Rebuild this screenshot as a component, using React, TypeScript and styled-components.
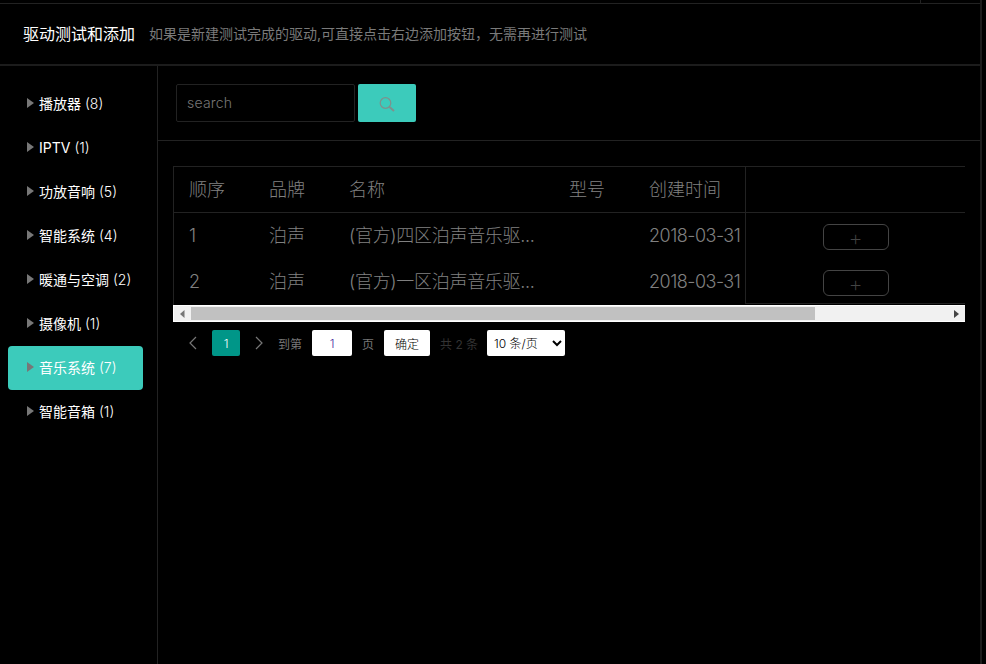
import React from "react";
import styled, { createGlobalStyle } from "styled-components";

const Global = createGlobalStyle`
  html, body { margin: 0; padding: 0; background: #000; }
  body { font-family: Inter, "Noto Sans CJK SC", sans-serif; }
  * { box-sizing: border-box; }
`;

const Page = styled.div`
  width: 982px;
  height: 664px;
  border-right: 2px solid #1c1c1c;
  overflow: hidden;
  display: flex;
  flex-direction: column;
  background: #000;
`;
const TopStrip = styled.div`
  height: 4px;
  border-bottom: 1px solid #222;
  padding-left: 920px;
  flex: none;
`;
const Tick = styled.div`
  width: 1px;
  height: 3px;
  background: #222;
`;
const Header = styled.header`
  height: 62px;
  flex: none;
  display: flex;
  align-items: center;
  padding: 0 0 2px 23px;
  border-bottom: 2px solid #1c1c1c;
`;
const Title = styled.h1`
  margin: 0;
  font-size: 16px;
  font-weight: 400;
  color: #fff;
`;
const Sub = styled.span`
  margin-left: 14px;
  font-size: 14px;
  color: #7a7a7a;
  font-weight: 400;
`;
const Body = styled.div`
  flex: 1;
  display: flex;
  min-height: 0;
`;
const Side = styled.nav`
  width: 158px;
  flex: none;
  border-right: 1px solid #222;
  padding: 16px 14px 0 8px;
  display: flex;
  flex-direction: column;
`;
const SideItem = styled.div<{ $active?: boolean }>`
  height: 44px;
  flex: none;
  display: flex;
  align-items: center;
  padding: 0 0 2px 19px;
  gap: 5px;
  font-size: 14px;
  font-weight: 400;
  color: #fff;
  border-radius: 4px;
  background: ${(p) => (p.$active ? "#3ccbbb" : "transparent")};
`;
const Arrow = styled.i`
  width: 0;
  height: 0;
  border-left: 7px solid #777;
  border-top: 5.5px solid transparent;
  border-bottom: 5.5px solid transparent;
`;
const Count = styled.span`
  font-weight: 350;
  margin-left: 4px;
`;
const Main = styled.main`
  flex: 1;
  min-width: 0;
  display: flex;
  flex-direction: column;
`;
const SearchBar = styled.div`
  height: 75px;
  flex: none;
  border-bottom: 1px solid #222;
  padding: 18px 0 0 18px;
  display: flex;
  gap: 3px;
  align-items: flex-start;
`;
const SearchInput = styled.input`
  width: 179px;
  height: 38px;
  background: #000;
  border: 1px solid #222;
  border-radius: 2px;
  padding: 0 10px 2px;
  font: 300 14px Inter, sans-serif;
  letter-spacing: 0.2px;
  color: #ccc;
  &::placeholder { color: #777; opacity: 1; }
`;
const SearchBtn = styled.button`
  width: 58px;
  height: 38px;
  background: #3ccbbb;
  border: 0;
  border-radius: 2px;
  padding: 2px 0 0;
  display: flex;
  align-items: center;
  justify-content: center;
`;
const TableWrap = styled.div`
  margin: 25px 0 0 15px;
  width: 792px;
  flex: none;
`;
const Viewport = styled.div`
  height: 139px;
  border-left: 1px solid #222;
  overflow: hidden;
`;
const Track = styled.div`
  width: 791px;
`;
const Row = styled.div<{ $head?: boolean }>`
  display: grid;
  grid-template-columns: 80px 80px 220px 80px 111px 220px;
  height: ${(p) => (p.$head ? "47px" : "46px")};
  ${(p) => p.$head && "border-top: 1px solid #222; border-bottom: 1px solid #222;"}
`;
const Cell = styled.div<{ $head?: boolean }>`
  padding-left: 15px;
  font-size: 18px;
  font-weight: 300;
  color: #808080;
  line-height: ${(p) => (p.$head ? "45px" : "46px")};
  white-space: nowrap;
`;
const NameCell = styled(Cell)`
  letter-spacing: -0.3px;
`;
const DateCell = styled(Cell)`
  letter-spacing: -0.5px;
`;
const Fixed = styled.div<{ $last?: boolean }>`
  background: #000;
  border-left: 1px solid #222;
  display: flex;
  justify-content: center;
  align-items: flex-start;
  padding-top: 11px;
  height: ${(p) => (p.$last ? "45px" : "auto")};
  ${(p) => p.$last && "border-bottom: 1px solid #222;"}
`;
const AddBtn = styled.button`
  width: 66px;
  height: 26px;
  background: transparent;
  border: 1px solid #444;
  border-radius: 6px;
  color: #444;
  font: 200 22px Inter, sans-serif;
  line-height: 22px;
  padding: 2px 0 0;
`;
const ScrollBar = styled.div`
  height: 17px;
  display: flex;
  background: #f1f1f1;
  border: 1px solid #fff;
  border-right: 0;
`;
const ScrollStep = styled.div`
  width: 17px;
  flex: none;
  display: flex;
  align-items: center;
  justify-content: center;
`;
const ScrollThumb = styled.div`
  width: 624px;
  margin: 1px 0;
  background: #c1c1c1;
`;
const ScrollRest = styled.div`
  flex: 1;
`;
const Pager = styled.div`
  margin: 8px 0 0 15px;
  height: 26px;
  display: flex;
  align-items: center;
  font-size: 12px;
  color: #777;
`;
const Chev = styled.button<{ $w: number }>`
  width: ${(p) => p.$w}px;
  height: 26px;
  background: none;
  border: 0;
  padding: 0;
  display: flex;
  align-items: center;
  justify-content: center;
`;
const Current = styled.span`
  width: 28px;
  height: 26px;
  background: #009688;
  color: #fff;
  border-radius: 2px;
  display: flex;
  align-items: center;
  justify-content: center;
  font-size: 12px;
  font-weight: 300;
`;
const PageInput = styled.input`
  width: 40px;
  height: 26px;
  margin: 0 10px;
  text-align: center;
  border: 0;
  border-radius: 2px;
  background: #fff;
  color: #4a2ea0;
  font: 300 12px Inter, sans-serif;
  padding: 0;
`;
const Confirm = styled.button`
  width: 46px;
  height: 26px;
  margin: 0 10px;
  background: #fff;
  color: #000;
  border: 0;
  border-radius: 2px;
  font: 300 12px Inter, "Noto Sans CJK SC", sans-serif;
  padding: 0;
`;
const Total = styled.span`
  color: #333;
  margin-right: 9px;
`;
const Select = styled.select`
  width: 78px;
  height: 26px;
  background: #fff;
  color: #000;
  border: 0;
  border-radius: 2px;
  font: 300 12px Inter, "Noto Sans CJK SC", sans-serif;
  padding-left: 3px;
`;

const cats: [string, string, boolean?][] = [
  ["播放器", "(8)"],
  ["IPTV", "(1)"],
  ["功放音响", "(5)"],
  ["智能系统", "(4)"],
  ["暖通与空调", "(2)"],
  ["摄像机", "(1)"],
  ["音乐系统", "(7)", true],
  ["智能音箱", "(1)"],
];
const rows = [
  ["1", "泊声", "(官方)四区泊声音乐驱...", "", "2018-03-31"],
  ["2", "泊声", "(官方)一区泊声音乐驱...", "", "2018-03-31"],
];

export default function App() {
  return (
    <Page>
      <Global />
      <TopStrip><Tick /></TopStrip>
      <Header>
        <Title>驱动测试和添加</Title>
        <Sub>如果是新建测试完成的驱动,可直接点击右边添加按钮，无需再进行测试</Sub>
      </Header>
      <Body>
        <Side>
          {cats.map(([t, c, a]) => (
            <SideItem key={t} $active={a}>
              <Arrow />
              <span>{t}<Count>{c}</Count></span>
            </SideItem>
          ))}
        </Side>
        <Main>
          <SearchBar>
            <SearchInput placeholder="search" />
            <SearchBtn aria-label="search">
              <svg width="16" height="15" viewBox="0 0 16 15" fill="none">
                <circle cx="6.5" cy="6" r="5.3" stroke="#7f908c" strokeWidth="1.2" />
                <path d="M10.5 10 15 14" stroke="#7f908c" strokeWidth="2" />
              </svg>
            </SearchBtn>
          </SearchBar>
          <TableWrap>
            <Viewport>
              <Track>
                <Row $head>
                  <Cell $head>顺序</Cell>
                  <Cell $head>品牌</Cell>
                  <Cell $head>名称</Cell>
                  <Cell $head>型号</Cell>
                  <Cell $head>创建时间</Cell>
                  <Fixed />
                </Row>
                {rows.map((r, i) => (
                  <Row key={r[0]}>
                    <Cell>{r[0]}</Cell>
                    <Cell>{r[1]}</Cell>
                    <NameCell>{r[2]}</NameCell>
                    <Cell>{r[3]}</Cell>
                    <DateCell>{r[4]}</DateCell>
                    <Fixed $last={i === rows.length - 1}>
                      <AddBtn>+</AddBtn>
                    </Fixed>
                  </Row>
                ))}
              </Track>
            </Viewport>
            <ScrollBar>
              <ScrollStep>
                <svg width="5" height="8" viewBox="0 0 5 8"><path d="M4.5 0v8L0 4z" fill="#777" /></svg>
              </ScrollStep>
              <ScrollThumb />
              <ScrollRest />
              <ScrollStep>
                <svg width="5" height="8" viewBox="0 0 5 8"><path d="M0 0v8l5-4z" fill="#444" /></svg>
              </ScrollStep>
            </ScrollBar>
          </TableWrap>
          <Pager>
            <Chev $w={39} aria-label="prev">
              <svg width="10" height="14" viewBox="0 0 10 14" fill="none">
                <path d="M8 1 2 7l6 6" stroke="#777" strokeWidth="1.2" />
              </svg>
            </Chev>
            <Current>1</Current>
            <Chev $w={38} aria-label="next">
              <svg width="10" height="14" viewBox="0 0 10 14" fill="none">
                <path d="M2 1l6 6-6 6" stroke="#777" strokeWidth="1.2" />
              </svg>
            </Chev>
            到第
            <PageInput defaultValue="1" />
            页
            <Confirm>确定</Confirm>
            <Total>共 2 条</Total>
            <Select defaultValue="10">
              <option value="10">10 条/页</option>
            </Select>
          </Pager>
        </Main>
      </Body>
    </Page>
  );
}
